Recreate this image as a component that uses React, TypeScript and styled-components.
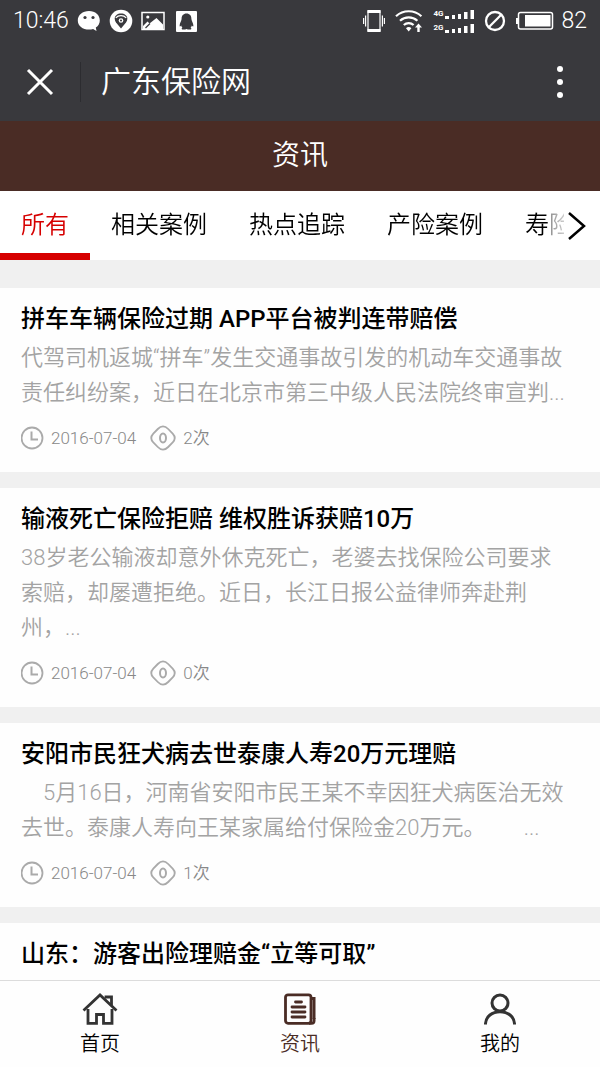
import React from "react";
import styled, { createGlobalStyle } from "styled-components";

const GlobalStyle = createGlobalStyle`
  * { box-sizing: border-box; }
  body {
    margin: 0;
    background: #f0f0f0;
    color: #000;
    font-family: Roboto, "Noto Sans CJK SC", sans-serif;
    font-weight: 350;
  }
  button {
    margin: 0;
    padding: 0;
    border: 0;
    background: none;
    font: inherit;
    color: inherit;
    cursor: pointer;
  }
  a { color: inherit; text-decoration: none; }
  svg { display: block; flex: none; }
`;

const Screen = styled.div`
  display: flex;
  flex-direction: column;
  height: 100vh;
`;

const TopChrome = styled.header`
  flex: none;
  background: #39393d;
  color: #fff;
`;

const StatusBar = styled.div`
  display: flex;
  align-items: center;
  justify-content: space-between;
  height: 42px;
  padding: 0 13px;
  font-size: 23px;
  font-weight: 300;
  line-height: 28px;
`;

const StatusGroup = styled.div<{ $gap: number }>`
  display: flex;
  align-items: center;
  gap: ${(p) => p.$gap}px;
`;

const SignalStack = styled.div`
  display: flex;
  flex-direction: column;
  gap: 4px;
`;

const SignalRow = styled.div`
  display: flex;
  align-items: center;
  gap: 2px;
  height: 10px;
  font-size: 8px;
  font-weight: 700;
  line-height: 10px;
`;

const AppBar = styled.div`
  display: flex;
  align-items: center;
  height: 79px;
`;

const CloseButton = styled.button`
  display: flex;
  align-items: center;
  justify-content: center;
  width: 80px;
  height: 40px;
`;

const SiteTitle = styled.div`
  flex: 1;
  padding-left: 20px;
  border-left: 1px solid #2c2c30;
  font-size: 30px;
  line-height: 40px;
`;

const MenuButton = styled(CloseButton)``;

const PageTitle = styled.h1`
  flex: none;
  margin: 0;
  background: #4a2c25;
  color: #fff;
  font-size: 28px;
  font-weight: 350;
  line-height: 70px;
  text-align: center;
`;

const TabBar = styled.nav`
  display: flex;
  flex: none;
  height: 69px;
  background: #fff;
`;

const TabStrip = styled.div`
  display: flex;
  flex: 1;
  min-width: 0;
  overflow: hidden;
  mask-image: linear-gradient(
    to right,
    #000 calc(100% - 16px),
    rgba(0, 0, 0, 0.4) calc(100% - 12px),
    rgba(0, 0, 0, 0.2)
  );
`;

const Tab = styled.button<{ $active?: boolean }>`
  flex: none;
  padding: 6px 21px 0;
  border-bottom: 7px solid ${(p) => (p.$active ? "#d60000" : "transparent")};
  color: ${(p) => (p.$active ? "#d60000" : "#000")};
  font-size: 24px;
  line-height: 56px;
  white-space: nowrap;
`;

const MoreTabs = styled.button`
  display: flex;
  align-items: center;
  justify-content: flex-start;
  width: 36px;
  padding-left: 4px;
`;

const Feed = styled.main`
  display: flex;
  flex: 1;
  flex-direction: column;
  gap: 16px;
  min-height: 0;
  padding-top: 28px;
  overflow-y: auto;
  scrollbar-width: none;
`;

const Card = styled.article`
  flex: none;
  padding: 13px 21px 20px;
  background: #fefefe;
`;

const CardTitle = styled.h2`
  margin: 0 0 3px;
  font-size: 24px;
  font-weight: 500;
  line-height: 36px;
`;

const Excerpt = styled.p`
  margin: 0;
  color: #a3a3a3;
  font-size: 22px;
  line-height: 35px;
  white-space: pre-line;
`;

const Meta = styled.div`
  display: flex;
  align-items: center;
  gap: 14px;
  height: 28px;
  margin-top: 14px;
  color: #888;
  font-size: 17px;
  line-height: 28px;
`;

const MetaItem = styled.span`
  display: flex;
  align-items: center;
  gap: 7px;
`;

const BottomNav = styled.nav`
  display: flex;
  flex: none;
  height: 87px;
  border-top: 1px solid #dcdcdc;
  background: #fefefe;
`;

const NavLink = styled.a<{ $active?: boolean }>`
  display: flex;
  flex: 1;
  flex-direction: column;
  align-items: center;
  gap: 4px;
  padding-top: 11px;
  color: ${(p) => (p.$active ? "#4a2c25" : "#000")};
  font-size: 20px;
  line-height: 28px;
`;

const WeChatIcon = () => (
  <svg width="24" height="24" viewBox="0 0 24 24" aria-hidden="true">
    <path fill="#fff" d="M12 2C5.600 2 .8 6 .8 11.400S5.600 20.500 12 20.500c1.500 0 2.900-.2 4.100-.6l3.400 2-.7-3.400c2.600-1.700 4-4.200 4-7.100C22.800 6 18.400 2 12 2z" />
    <circle cx="8" cy="8.500" r="1.600" fill="#39393d" />
    <circle cx="16" cy="8.500" r="1.600" fill="#39393d" />
  </svg>
);

const LocationIcon = () => (
  <svg width="24" height="24" viewBox="0 0 24 24" aria-hidden="true">
    <circle cx="12" cy="12" r="11.300" fill="#fff" />
    <path fill="#39393d" d="M12 19.500 7 13.400a6 6 0 0 1-1.300-3.600C5.700 6.500 8.500 4.500 12 4.500s6.300 2 6.300 5.300c0 1.400-.5 2.600-1.300 3.600z" />
    <path fill="none" stroke="#fff" strokeWidth="1.200" d="M6.800 8.800c2.600-3 7.800-3 10.400 0" />
    <circle cx="12" cy="11.500" r="2.300" fill="#fff" />
    <circle cx="12" cy="11.500" r="1" fill="#39393d" />
  </svg>
);

const PictureIcon = () => (
  <svg width="24" height="20" viewBox="0 0 24 20" aria-hidden="true">
    <rect x="1" y="1.500" width="22" height="17" fill="none" stroke="#fff" strokeWidth="1.500" />
    <circle cx="6.800" cy="6" r="1.600" fill="#fff" />
    <path fill="#fff" d="M2 17v-2l4.500-4.500 2 2L15.500 7 22 13.500V18H2z" />
    <path stroke="#39393d" strokeWidth="1.200" d="m4.500 17 4.500-4.500" />
  </svg>
);

const PenguinIcon = () => (
  <svg width="24" height="21" viewBox="-3 0 24 21" aria-hidden="true">
    <rect width="21" height="21" rx="1" fill="#fff" />
    <path fill="#39393d" d="M10.500 2.500c-3.200 0-5 2.300-4.900 5.500-.1 2-2.100 4.200-2 7 .1.800.8.500 1.600-.5.200.9.600 1.700 1.200 2.300-1.400.8-.8 1.800 1 1.800 1.300 0 2.300-.2 3.100-.7.800.5 1.800.7 3.100.7 1.800 0 2.400-1 1-1.800.6-.6 1-1.400 1.200-2.300.8 1 1.500 1.300 1.600.5.100-2.800-1.900-5-2-7 .1-3.200-1.700-5.500-4.900-5.500z" />
  </svg>
);

const VibrateIcon = () => (
  <svg width="22" height="22" viewBox="0 0 22 22" aria-hidden="true">
    <rect x="5" y="1" width="12" height="20" fill="none" stroke="#fff" strokeWidth="1.200" />
    <path fill="#fff" d="M4.500 0h13v3h-13zM4.500 19h13v3h-13z" />
    <path stroke="#fff" strokeWidth="1.200" d="M2.600 5.500v11M19.400 5.500v11M.6 8v6M21.400 8v6" />
  </svg>
);

const WifiIcon = () => (
  <svg width="28" height="24" viewBox="0 0 28 24" aria-hidden="true">
    <g fill="none" stroke="#fff" strokeWidth="2.200">
      <path d="M1 7.200c7.200-6.600 18.200-6.600 25.400 0" />
      <path d="M5 11.800c5-4.600 12.400-4.600 17.400 0" />
      <path d="M8.800 16c2.800-2.600 7-2.600 9.800 0" />
    </g>
    <path fill="#fff" d="M11 19.200c1.600-1.500 3.800-1.500 5.400 0L13.700 22.500zM23.500 14.500l3.500 4h-2.300v4.500h-2.400v-4.500H20z" />
  </svg>
);

const SignalBars = () => (
  <svg width="29" height="9" viewBox="0 0 29 9" aria-hidden="true">
    <path fill="#fff" d="M0 6h4v3H0zM7 5h3v4H7zM13 4h3v5h-3zM19 2h3.500v7H19zM25.500 0h3.500v9h-3.500z" />
  </svg>
);

const BlockedIcon = () => (
  <svg width="22" height="22" viewBox="0 0 22 22" fill="none" stroke="#fff" strokeWidth="2.300" aria-hidden="true">
    <circle cx="11" cy="11" r="9" />
    <path d="M4.800 17.200 17.200 4.800" />
  </svg>
);

const BatteryIcon = () => (
  <svg width="38" height="20" viewBox="0 0 38 20" aria-hidden="true">
    <rect x="2.500" y="1.500" width="34" height="16.500" rx="2" fill="none" stroke="#fff" strokeWidth="1.500" />
    <path fill="#fff" d="M0 7h2v6H0zM9 4h25.500v11.500H9z" />
  </svg>
);

const CloseIcon = () => (
  <svg width="28" height="28" viewBox="0 0 28 28" stroke="#fff" strokeWidth="3" aria-hidden="true">
    <path d="m2 2 24 24M26 2 2 26" />
  </svg>
);

const DotsIcon = () => (
  <svg width="8" height="34" viewBox="0 0 8 34" fill="#fff" aria-hidden="true">
    <circle cx="4" cy="4" r="3" />
    <circle cx="4" cy="17" r="3" />
    <circle cx="4" cy="30" r="3" />
  </svg>
);

const ChevronIcon = () => (
  <svg width="18" height="30" viewBox="0 0 18 30" fill="none" stroke="#000" strokeWidth="2.500" aria-hidden="true">
    <path d="m1 2 15 13L1 28" />
  </svg>
);

const ClockIcon = () => (
  <svg width="23" height="24" viewBox="0 0 23 24" fill="none" stroke="#aaa" aria-hidden="true">
    <circle cx="11" cy="12" r="10.500" strokeWidth="1.800" />
    <path strokeWidth="2" d="M10.500 5.500v8H17" />
  </svg>
);

const EyeIcon = () => (
  <svg width="26" height="26" viewBox="0 0 26 26" fill="none" stroke="#aaa" aria-hidden="true">
    <path strokeWidth="1.800" d="M13 1.300c2 0 3.500.9 5.200 2.700l4.500 4.600c2.700 2.900 2.700 5.900 0 8.800L18.200 22c-3.400 3.600-7 3.600-10.400 0l-4.500-4.600c-2.700-2.900-2.700-5.900 0-8.800L7.800 4c1.700-1.800 3.200-2.700 5.200-2.700z" />
    <ellipse cx="13" cy="13" rx="3" ry="4.500" strokeWidth="2" />
  </svg>
);

const HomeIcon = () => (
  <svg width="36" height="34" viewBox="0 0 36 34" fill="none" stroke="#333" strokeWidth="2.800" aria-hidden="true">
    <path d="M1.500 18.500 18 3l16.500 15.500" />
    <path d="M24 6.500V5h5.500v8.500" />
    <path d="M6 17v14.300h8.500V22.500h7v8.800H30V17" />
  </svg>
);

const NewsIcon = () => (
  <svg width="34" height="34" viewBox="0 0 34 34" fill="none" stroke="#4a2c25" aria-hidden="true">
    <rect x="2.500" y="2.800" width="25.500" height="28.500" rx="2.500" strokeWidth="2.800" />
    <path strokeWidth="3" d="M28 6.500h3V27" />
    <path strokeWidth="2.800" d="M31.100 26v2.700c0 1.700-.8 2.600-2.500 2.600H26" />
    <path strokeWidth="2.800" strokeLinecap="round" d="M12.500 10h6M9 15h13M9 20h13M9 25h13" />
  </svg>
);

const PersonIcon = () => (
  <svg width="34" height="34" viewBox="0 0 34 34" fill="none" stroke="#333" strokeWidth="3" aria-hidden="true">
    <circle cx="17" cy="11" r="8" />
    <path d="M2.500 32.500v-1C3 24.500 9 19.700 17 19.700s14 4.800 14.500 11.800v1" />
  </svg>
);

const tabs = ["所有", "相关案例", "热点追踪", "产险案例", "寿险"];

interface Article {
  title: string;
  excerpt?: string;
  date?: string;
  views?: number;
}

const articles: Article[] = [
  {
    title: "拼车车辆保险过期 APP平台被判连带赔偿",
    excerpt:
      "代驾司机返城“拼车”发生交通事故引发的机动车交通事故\n责任纠纷案，近日在北京市第三中级人民法院终审宣判...",
    date: "2016-07-04",
    views: 2,
  },
  {
    title: "输液死亡保险拒赔 维权胜诉获赔10万",
    excerpt:
      "38岁老公输液却意外休克死亡，老婆去找保险公司要求\n索赔，却屡遭拒绝。近日，长江日报公益律师奔赴荆\n州，...",
    date: "2016-07-04",
    views: 0,
  },
  {
    title: "安阳市民狂犬病去世泰康人寿20万元理赔",
    excerpt:
      "\u30005月16日，河南省安阳市民王某不幸因狂犬病医治无效\n去世。泰康人寿向王某家属给付保险金20万元。\u3000\u3000 ...",
    date: "2016-07-04",
    views: 1,
  },
  { title: "山东：游客出险理赔金“立等可取”" },
];

export default function App() {
  return (
    <>
      <GlobalStyle />
      <Screen>
        <TopChrome>
          <StatusBar>
            <StatusGroup $gap={8}>
              <span>10:46</span>
              <WeChatIcon />
              <LocationIcon />
              <PictureIcon />
              <PenguinIcon />
            </StatusGroup>
            <StatusGroup $gap={10}>
              <VibrateIcon />
              <WifiIcon />
              <SignalStack>
                <SignalRow>
                  4G
                  <SignalBars />
                </SignalRow>
                <SignalRow>
                  2G
                  <SignalBars />
                </SignalRow>
              </SignalStack>
              <BlockedIcon />
              <StatusGroup $gap={7}>
                <BatteryIcon />
                <span>82</span>
              </StatusGroup>
            </StatusGroup>
          </StatusBar>
          <AppBar>
            <CloseButton aria-label="关闭">
              <CloseIcon />
            </CloseButton>
            <SiteTitle>广东保险网</SiteTitle>
            <MenuButton aria-label="菜单">
              <DotsIcon />
            </MenuButton>
          </AppBar>
        </TopChrome>
        <PageTitle>资讯</PageTitle>
        <TabBar>
          <TabStrip>
            {tabs.map((name, i) => (
              <Tab key={name} $active={i === 0}>
                {name}
              </Tab>
            ))}
          </TabStrip>
          <MoreTabs aria-label="更多">
            <ChevronIcon />
          </MoreTabs>
        </TabBar>
        <Feed>
          {articles.map((a) => (
            <Card key={a.title}>
              <CardTitle>
                <a href="#article">{a.title}</a>
              </CardTitle>
              {a.excerpt && <Excerpt>{a.excerpt}</Excerpt>}
              {a.date && (
                <Meta>
                  <MetaItem>
                    <ClockIcon />
                    {a.date}
                  </MetaItem>
                  <MetaItem>
                    <EyeIcon />
                    {a.views}次
                  </MetaItem>
                </Meta>
              )}
            </Card>
          ))}
        </Feed>
        <BottomNav>
          <NavLink href="#home">
            <HomeIcon />
            首页
          </NavLink>
          <NavLink href="#news" $active>
            <NewsIcon />
            资讯
          </NavLink>
          <NavLink href="#me">
            <PersonIcon />
            我的
          </NavLink>
        </BottomNav>
      </Screen>
    </>
  );
}
